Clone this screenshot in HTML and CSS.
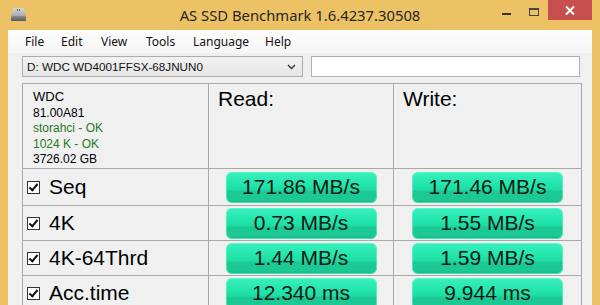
FILE: index.html
```html
<!DOCTYPE html>
<html>
<head>
<meta charset="utf-8">
<link rel="stylesheet" href="styles.css">
</head>
<body>
<div class="window">
  <div class="titlebar">
    <svg class="appicon" width="17" height="15" viewBox="0 0 17 15">
      <defs>
        <linearGradient id="dtop" x1="0" y1="0" x2="0" y2="1">
          <stop offset="0" stop-color="#d8d8d8"/>
          <stop offset="1" stop-color="#a8a8a8"/>
        </linearGradient>
        <linearGradient id="dbot" x1="0" y1="0" x2="0" y2="1">
          <stop offset="0" stop-color="#8a8a8a"/>
          <stop offset="1" stop-color="#5a5a5a"/>
        </linearGradient>
      </defs>
      <path d="M3 1 H14 L16 9 H1 Z" fill="url(#dtop)"/>
      <rect x="1" y="9" width="15" height="5" rx="1" fill="url(#dbot)"/>
      <rect x="7" y="2" width="1" height="2" fill="#666"/>
      <rect x="9" y="2" width="1" height="2" fill="#666"/>
    </svg>
    <div class="title">AS SSD Benchmark 1.6.4237.30508</div>
    <div class="controls">
      <span class="ctl-min"></span>
      <span class="ctl-max"></span>
      <span class="ctl-close">
        <svg width="10" height="9" viewBox="0 0 10 9"><path d="M1 0.5 L9 8.5 M9 0.5 L1 8.5" stroke="#fff" stroke-width="2"/></svg>
      </span>
    </div>
  </div>
  <div class="client">
    <div class="menubar">
      <span class="menu m-file">File</span>
      <span class="menu m-edit">Edit</span>
      <span class="menu m-view">View</span>
      <span class="menu m-tools">Tools</span>
      <span class="menu m-lang">Language</span>
      <span class="menu m-help">Help</span>
    </div>
    <div class="toolbar">
      <div class="combo">
        <span class="combo-text">D: WDC WD4001FFSX-68JNUN0</span>
        <svg class="combo-arrow" width="9" height="6" viewBox="0 0 9 6"><path d="M1 1 L4.5 4.5 L8 1" fill="none" stroke="#333" stroke-width="1.4"/></svg>
      </div>
      <div class="textbox"></div>
    </div>
    <div class="grid">
      <div class="cell info">
        <div class="info-name">WDC</div>
        <div class="info-line">81.00A81</div>
        <div class="info-line ok">storahci - OK</div>
        <div class="info-line ok">1024 K - OK</div>
        <div class="info-line">3726.02 GB</div>
      </div>
      <div class="cell head">Read:</div>
      <div class="cell head">Write:</div>

      <div class="cell label"><span class="check"></span>Seq</div>
      <div class="cell val"><span class="pill">171.86 MB/s</span></div>
      <div class="cell val"><span class="pill">171.46 MB/s</span></div>

      <div class="cell label"><span class="check"></span>4K</div>
      <div class="cell val"><span class="pill">0.73 MB/s</span></div>
      <div class="cell val"><span class="pill">1.55 MB/s</span></div>

      <div class="cell label"><span class="check"></span>4K-64Thrd</div>
      <div class="cell val"><span class="pill">1.44 MB/s</span></div>
      <div class="cell val"><span class="pill">1.59 MB/s</span></div>

      <div class="cell label"><span class="check"></span>Acc.time</div>
      <div class="cell val"><span class="pill">12.340 ms</span></div>
      <div class="cell val"><span class="pill">9.944 ms</span></div>
    </div>
  </div>
</div>
</body>
</html>
```

FILE: styles.css
```css
* { box-sizing: border-box; }
html, body { margin: 0; padding: 0; }
body {
  width: 600px;
  height: 305px;
  overflow: hidden;
  background: #ecc264;
  font-family: "Liberation Sans", Arial, sans-serif;
  color: #000;
}
.window {
  width: 600px;
  height: 305px;
  display: flex;
  flex-direction: column;
  background: #ecc264;
}
.titlebar {
  height: 30px;
  flex: none;
  position: relative;
  display: flex;
  align-items: center;
  justify-content: center;
}
.appicon {
  position: absolute;
  left: 10px;
  top: 7px;
}
.title {
  font-family: "Noto Sans", "Open Sans", sans-serif;
  font-size: 14.8px;
  color: #262626;
  margin-top: -1px;
}
.controls {
  position: absolute;
  right: 8px;
  top: 0;
  height: 20px;
  display: flex;
  align-items: flex-start;
}
.ctl-min {
  width: 9px;
  height: 2px;
  background: #333;
  margin-top: 13px;
  margin-right: 18px;
}
.ctl-max {
  width: 10px;
  height: 8px;
  border: 1px solid #444;
  border-top-width: 2px;
  margin-top: 8px;
  margin-right: 9px;
}
.ctl-close {
  width: 44px;
  height: 20px;
  background: #c7504f;
  display: flex;
  align-items: center;
  justify-content: center;
}
.client {
  flex: 1;
  margin: 0 8px;
  background: #f0f0f0;
  display: flex;
  flex-direction: column;
}
.menubar {
  height: 23px;
  flex: none;
  background: linear-gradient(#fdfdfd, #f6f6f6);
  display: flex;
  align-items: center;
  padding-left: 17px;
  font-family: "Noto Sans", "Open Sans", sans-serif;
  font-size: 12px;
  color: #111;
}
.menu { display: block; }
.m-file { width: 36px; }
.m-edit { width: 40px; }
.m-view { width: 45px; }
.m-tools { width: 47px; }
.m-lang { width: 72px; }
.toolbar {
  display: flex;
  gap: 8px;
  padding: 3px 12px 0 14px;
  height: 27px;
  flex: none;
}
.combo {
  width: 281px;
  height: 21px;
  border: 1px solid #acacac;
  background: linear-gradient(#f2f2f2, #e6e6e6);
  display: flex;
  align-items: center;
  padding-left: 4px;
  position: relative;
  font-size: 11.7px;
  color: #111;
}
.combo-text { flex: 1; }
.combo-arrow { margin-right: 6px; }
.textbox {
  flex: 1;
  height: 21px;
  border: 1px solid #b0b0b0;
  background: #fff;
}
.grid {
  margin: 3px 0 0 14px;
  width: 560px;
  display: grid;
  grid-template-columns: 185px 184px 1fr;
  grid-template-rows: 84px 36px 34px 34px 34px;
  gap: 1px;
  background: #a8a8a8;
  border: 1px solid #a8a8a8;
  border-bottom: none;
}
.cell {
  background: #f0f0f0;
}
.info {
  padding: 5px 0 0 10px;
}
.info-name {
  font-size: 13px;
  line-height: 16px;
  margin-bottom: 1px;
}
.info-line {
  font-size: 12px;
  line-height: 15.3px;
}
.ok { color: #1f7a22; }
.head {
  font-size: 21px;
  padding: 3px 0 0 9px;
  line-height: 24px;
}
.label {
  display: flex;
  align-items: center;
  font-size: 21px;
  padding-left: 4px;
}
.check {
  width: 13px;
  height: 13px;
  border: 1px solid #333;
  background: #fff;
  margin-right: 9px;
  position: relative;
}
.check::after {
  content: "";
  position: absolute;
  left: 3px;
  top: 0px;
  width: 3px;
  height: 7px;
  border-right: 2px solid #111;
  border-bottom: 2px solid #111;
  transform: rotate(40deg);
}
.val {
  display: flex;
  align-items: center;
  justify-content: center;
}
.pill {
  width: 151px;
  height: 31px;
  border-radius: 6px;
  background: linear-gradient(#3af0bd 0%, #20e4aa 45%, #1fdba3 58%, #1cc994 62%, #1cc994 88%, #18b585 100%);
  box-shadow: inset 0 0 0 1px rgba(120, 255, 210, 0.5);
  display: flex;
  align-items: center;
  justify-content: center;
  font-size: 21px;
  color: #0a1a14;
}
```
